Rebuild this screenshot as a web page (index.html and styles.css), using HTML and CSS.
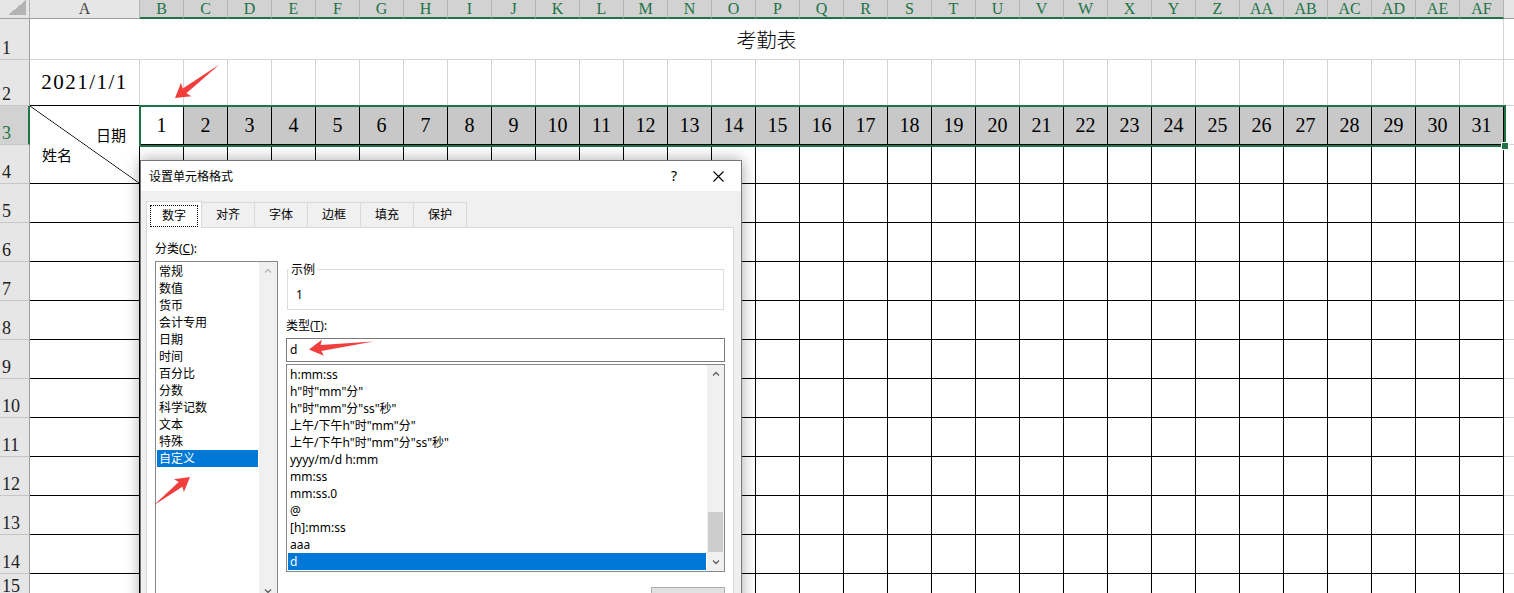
FILE: index.html
```html
<!DOCTYPE html>
<html>
	<head>
		<meta charset="utf-8">
		<title>考勤表 - 设置单元格格式</title>
		<link rel="stylesheet" href="styles.css">
	</head>
	<body>
		<div class="workbook">
			<table class="sheet" id="sheet"></table>
			<div class="selection"><span class="fill-handle"></span></div>

			<div class="dialog">
				<div class="dialog-title">
					<span>设置单元格格式</span>
					<span class="title-buttons">
						<span class="help">?</span>
						<svg width="11" height="11" viewBox="0 0 11 11"><path d="M0.5 0.5L10.5 10.5M10.5 0.5L0.5 10.5" stroke="#000" stroke-width="1.1"/></svg>
					</span>
				</div>
				<div class="dialog-body">
					<div class="tabs">
						<div class="tab active"><span class="focus">数字</span></div>
						<div class="tab">对齐</div>
						<div class="tab">字体</div>
						<div class="tab">边框</div>
						<div class="tab">填充</div>
						<div class="tab">保护</div>
					</div>
					<div class="tab-page">
						<div class="category">
							<div class="label">分类(<u>C</u>):</div>
							<div class="listbox categories">
								<ul class="items">
									<li>常规</li>
									<li>数值</li>
									<li>货币</li>
									<li>会计专用</li>
									<li>日期</li>
									<li>时间</li>
									<li>百分比</li>
									<li>分数</li>
									<li>科学记数</li>
									<li>文本</li>
									<li>特殊</li>
									<li class="chosen">自定义</li>
								</ul>
								<div class="vscroll">
									<span class="arrow off"><svg width="8" height="5" viewBox="0 0 8 5"><polyline points="1,4.5 4,1.5 7,4.5" fill="none" stroke="currentColor" stroke-width="1.3"/></svg></span>
									<span class="track"></span>
									<span class="arrow"><svg width="8" height="5" viewBox="0 0 8 5"><polyline points="1,0.5 4,3.5 7,0.5" fill="none" stroke="currentColor" stroke-width="1.3"/></svg></span>
								</div>
							</div>
						</div>
						<div class="format">
							<fieldset class="sample">
								<legend>示例</legend>
								<div>1</div>
							</fieldset>
							<div class="label type-label">类型(<u>T</u>):</div>
							<div class="type-input">d</div>
							<div class="listbox types">
								<ul class="items">
									<li>h:mm:ss</li>
									<li>h"时"mm"分"</li>
									<li>h"时"mm"分"ss"秒"</li>
									<li>上午/下午h"时"mm"分"</li>
									<li>上午/下午h"时"mm"分"ss"秒"</li>
									<li>yyyy/m/d h:mm</li>
									<li>mm:ss</li>
									<li>mm:ss.0</li>
									<li>@</li>
									<li>[h]:mm:ss</li>
									<li>aaa</li>
									<li class="chosen">d</li>
								</ul>
								<div class="vscroll">
									<span class="arrow"><svg width="8" height="5" viewBox="0 0 8 5"><polyline points="1,4.5 4,1.5 7,4.5" fill="none" stroke="currentColor" stroke-width="1.3"/></svg></span>
									<span class="track"><span class="thumb"></span></span>
									<span class="arrow"><svg width="8" height="5" viewBox="0 0 8 5"><polyline points="1,0.5 4,3.5 7,0.5" fill="none" stroke="currentColor" stroke-width="1.3"/></svg></span>
								</div>
							</div>
							<div class="buttons"><span class="button"></span></div>
						</div>
					</div>
				</div>
			</div>

			<!-- red arrows drawn on top of the screenshot -->
			<svg class="marks" width="1514" height="593">
				<polygon transform="translate(175 98) rotate(-37)" points="0,0 14,-8.5 12,-3 56,0 12,3 14,8.5"/>
				<polygon transform="translate(309 349.5) rotate(-7)" points="0,0 14,-8 12,-3 65,0 12,3 14,8"/>
				<polygon transform="translate(190 477) rotate(142)" points="0,0 14,-8 12,-3 46,0 12,3 14,8"/>
			</svg>
		</div>
		<script src="script.js"></script>
	</body>
</html>
```

FILE: styles.css
```css
body {
	margin: 0;
	background: #ffffff;
	overflow: hidden;
}

.workbook {
	position: relative;
	width: 1514px;
	height: 593px;
	overflow: hidden;
}

/* ---------- worksheet ---------- */

.sheet {
	border-collapse: separate;
	border-spacing: 0;
	table-layout: fixed;
	width: 1544px;
	font-family: "Liberation Serif", "Noto Sans CJK SC", serif;
	color: #000;
}

.sheet col.c-head { width: 30px; }
.sheet col.c-name { width: 110px; }
.sheet col.c-day { width: 44px; }
.sheet col.c-spare { width: 40px; }

.sheet th,
.sheet td {
	padding: 0;
	border-right: 1px solid #d4d4d4;
	border-bottom: 1px solid #d4d4d4;
	white-space: nowrap;
	overflow: hidden;
}

.sheet tr.head { height: 19px; }
.sheet tr.r1 { height: 41px; }
.sheet tr.r2 { height: 46px; }
.sheet tr.r3 { height: 39px; }
.sheet tr.row { height: 39px; }
.sheet tr.plain { height: 24px; }

.head th {
	background: #e6e6e6;
	border-right-color: #b4b4b4;
	border-bottom: 1px solid #9f9f9f;
	font-weight: normal;
	font-size: 16px;
	line-height: 16px;
	color: #444;
	text-align: center;
	vertical-align: middle;
}

.head th.picked {
	background: #d2d2d2;
	color: #217346;
	border-bottom: 2px solid #217346;
}

.head th.corner {
	background: linear-gradient(to bottom right, transparent 50%, #b4b4b4 50%) no-repeat right 3px bottom 3px / 18px 15px, #e6e6e6;
}

th.rh {
	background: #e6e6e6;
	border-right: 1px solid #9f9f9f;
	border-bottom-color: #c6c6c6;
	text-align: left;
	vertical-align: bottom;
	padding: 0 0 3px 2px;
	font-weight: normal;
	font-size: 18px;
	line-height: 16px;
	color: #222;
}

th.rh.picked {
	background: #d2d2d2;
	color: #217346;
	border-right: 2px solid #217346;
}

.title {
	text-align: center;
	vertical-align: middle;
	font-family: "Noto Sans CJK SC", sans-serif;
	font-weight: 300;
	font-size: 20px;
	padding-top: 2px;
}

.date {
	text-align: center;
	vertical-align: middle;
	font-size: 21px;
	letter-spacing: 1.5px;
	padding-top: 4px;
	border-bottom-color: #000 !important;
}

.under {
	border-bottom-color: #000 !important;
}

.split {
	vertical-align: top;
	border-right-color: #000 !important;
	border-bottom-color: #000 !important;
	background: linear-gradient(to top right, transparent calc(50% - 0.7px), #000 50%, transparent calc(50% + 0.7px));
	font-family: "Noto Sans CJK SC", sans-serif;
	font-size: 15px;
	line-height: 20px;
}

.by-day {
	display: block;
	text-align: right;
	padding: 19px 13px 0 0;
}

.by-name {
	display: block;
	padding-left: 12px;
}

.day {
	background: #c8c8c8;
	border-right-color: #000 !important;
	border-bottom-color: #000 !important;
	text-align: center;
	vertical-align: middle;
	font-size: 20px;
}

.day.active {
	background: #ffffff;
}

.box {
	border-right-color: #000 !important;
	border-bottom-color: #000 !important;
}

.selection {
	position: absolute;
	left: 139px;
	top: 105px;
	width: 1367px;
	height: 42px;
	box-sizing: border-box;
	border: 2px solid #217346;
	pointer-events: none;
}

.fill-handle {
	position: absolute;
	right: -5px;
	bottom: -5px;
	width: 6px;
	height: 6px;
	background: #217346;
	border: 1px solid #ffffff;
}

/* ---------- format cells dialog ---------- */

.dialog {
	position: absolute;
	left: 140px;
	top: 160px;
	width: 602px;
	height: 470px;
	box-sizing: border-box;
	border: 1px solid #777;
	background: #f0f0f0;
	box-shadow: 0 0 14px rgba(0, 0, 0, 0.35);
	font-family: "Noto Sans", "Noto Sans CJK SC", sans-serif;
	font-size: 12px;
	color: #000;
}

.dialog-title {
	height: 30px;
	background: #ffffff;
	display: flex;
	align-items: center;
	justify-content: space-between;
	padding-left: 8px;
}

.title-buttons {
	display: flex;
	align-items: center;
	gap: 36px;
	padding-right: 17px;
}

.help {
	font-size: 14px;
	line-height: 14px;
}

.dialog-body {
	padding: 10px 7px 0 5px;
}

.tabs {
	display: flex;
	align-items: flex-end;
	height: 27px;
	margin-bottom: -1px;
	position: relative;
	z-index: 2;
}

.tab {
	height: 25px;
	margin: 0 0 1px -1px;
	padding: 0 14px;
	box-sizing: border-box;
	border: 1px solid #d9d9d9;
	border-bottom: none;
	line-height: 24px;
	background: #f0f0f0;
}

.tab.active {
	height: 27px;
	margin: 0;
	padding: 3px 3px 0;
	background: #ffffff;
	position: relative;
	z-index: 1;
}

.focus {
	display: block;
	border: 1px dotted #000;
	padding: 0 11px;
	line-height: 20px;
}

.tab-page {
	height: 420px;
	box-sizing: border-box;
	background: #ffffff;
	border: 1px solid #d9d9d9;
	padding: 12px 8px 0 8px;
	display: grid;
	grid-template-columns: 123px 439px;
	column-gap: 8px;
	align-items: start;
}

.label {
	line-height: 17px;
	margin-bottom: 4px;
}

.listbox {
	display: flex;
	box-sizing: border-box;
	border: 1px solid #828790;
	background: #ffffff;
}

.categories {
	height: 340px;
}

.items {
	list-style: none;
	margin: 0;
	padding: 1px;
	flex: 1;
	min-width: 0;
}

.items li {
	line-height: 17px;
	height: 17px;
	padding-left: 2px;
	white-space: nowrap;
}

.items li.chosen {
	background: #0078d7;
	color: #ffffff;
}

.vscroll {
	width: 17px;
	background: #f0f0f0;
	display: flex;
	flex-direction: column;
}

.categories .vscroll {
	width: 18px;
}

.arrow {
	height: 17px;
	display: flex;
	align-items: center;
	justify-content: center;
	color: #606060;
}

.arrow.off {
	color: #b8b8b8;
}

.track {
	flex: 1;
}

.thumb {
	display: block;
	margin: 130px 1px 0;
	height: 40px;
	background: #cdcdcd;
}

.sample {
	margin: 21px 1px 0;
	padding: 8px 8px 6px;
	border: 1px solid #dcdcdc;
	min-width: 0;
	line-height: 17px;
}

.sample legend {
	margin-left: -7px;
	padding: 0 2px;
	line-height: 17px;
}

.type-label {
	margin: 7px 0 4px;
}

.type-input {
	height: 24px;
	box-sizing: border-box;
	border: 1px solid #7a7a7a;
	padding-left: 3px;
	line-height: 22px;
}

.types {
	height: 208px;
	margin-top: 2px;
}

.buttons {
	display: flex;
	justify-content: flex-end;
	margin-top: 15px;
}

.button {
	width: 74px;
	height: 23px;
	box-sizing: border-box;
	background: #e1e1e1;
	border: 1px solid #adadad;
}

/* ---------- annotation arrows ---------- */

.marks {
	position: absolute;
	left: 0;
	top: 0;
	pointer-events: none;
}

.marks polygon {
	fill: #f23d3d;
}
```

FILE: script.js
```js
const sheet = document.getElementById('sheet');

// column letters B .. AF
const letters = [];
for (let i = 1; i <= 31; i++) {
	if (i < 26) letters.push(String.fromCharCode(65 + i));
	else letters.push('A' + String.fromCharCode(65 + i - 26));
}

let html = '<colgroup><col class="c-head"><col class="c-name">';
letters.forEach(() => { html += '<col class="c-day">'; });
html += '<col class="c-spare"></colgroup><tbody>';

// column headers
html += '<tr class="head"><th class="corner"></th><th>A</th>';
letters.forEach(l => { html += `<th class="picked">${l}</th>`; });
html += '<th></th></tr>';

// row 1: merged title
html += '<tr class="r1"><th class="rh">1</th><td class="title" colspan="32">考勤表</td><td></td></tr>';

// row 2: date
html += '<tr class="r2"><th class="rh">2</th><td class="date">2021/1/1</td>';
html += '<td class="under"></td>'.repeat(31);
html += '<td></td></tr>';

// row 3: day numbers
html += '<tr class="r3"><th class="rh picked">3</th>';
html += '<td class="split" rowspan="2"><span class="by-day">日期</span><span class="by-name">姓名</span></td>';
for (let d = 1; d <= 31; d++) {
	html += `<td class="day${d === 1 ? ' active' : ''}">${d}</td>`;
}
html += '<td></td></tr>';

// rows 4..14: empty bordered grid, row 15 is only partly in view
for (let r = 4; r <= 15; r++) {
	html += `<tr class="${r < 15 ? 'row' : 'plain'}"><th class="rh">${r}</th>`;
	if (r > 4) html += '<td class="box"></td>';
	html += '<td class="box"></td>'.repeat(31);
	html += '<td></td></tr>';
}

html += '</tbody>';
sheet.innerHTML = html;
```
